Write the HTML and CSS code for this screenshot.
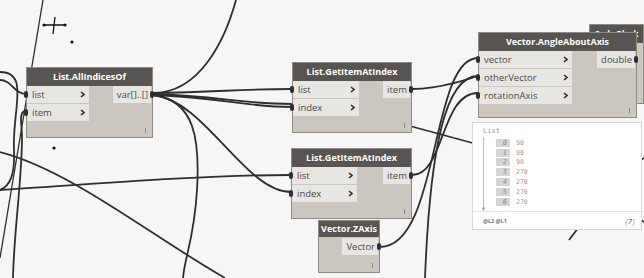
FILE: index.html
```html
<!DOCTYPE html>
<html>
  <head>
    <title>Dynamo graph</title>
    <link rel="stylesheet" href="styles.css">
  </head>
  <body>
    <div class="canvas">
      <svg class="wires" width="644" height="278" viewBox="0 0 644 278">
        <g class="wire">
          <path class="thin" d="M43,0 L0,258"/>
          <path d="M0,80 C12,80 14,94 26,94"/>
          <path d="M0,72 C30,72 12,110 14,150 C15,175 10,186 0,190"/>
          <path d="M26,111 C18,111 22,125 22,137 C22,180 14,230 13,278"/>
          <path d="M0,152 C70,170 150,235 225,278"/>
          <path d="M0,190 C80,185 200,175 291,175"/>
          <!-- from List.AllIndicesOf -->
          <path d="M153,93 C200,93 225,40 236,0"/>
          <path d="M153,93 C220,92 240,89 292,89"/>
          <path d="M153,94 C220,96 240,104 292,104"/>
          <path d="M153,95 C225,98 245,107 292,107"/>
          <path d="M153,95 C205,100 245,192 291,192"/>
          <path d="M153,95 C195,100 200,140 197,190 S185,255 183,278"/>
          <path d="M292,94 L480,145"/>
          <!-- into Vector.AngleAboutAxis -->
          <path d="M412,89 C470,89 530,48 589,48"/>
          <path d="M412,175 C445,175 440,93 478,93"/>
          <path d="M380,247 C440,247 430,58 478,58"/>
          <path d="M478,76 C445,76 430,150 425,278"/>
          <path d="M569,240 C600,200 620,170 644,158"/>
          <path d="M610,200 L644,222"/>
          <path d="M636,48 L644,48"/>
        </g>
        <g class="cursor">
          <path d="M44,25 L65,25 M55,17 L53,34"/>
          <circle cx="44" cy="25" r="1.6"/>
          <circle cx="65" cy="25" r="1.6"/>
          <circle cx="72" cy="42" r="1.6"/>
          <circle cx="54" cy="148" r="1.6"/>
        </g>
      </svg>

      <div class="node n-indices">
        <div class="node-title">List.AllIndicesOf</div>
        <div class="node-body">
          <div class="inputs">
            <div class="in-row"><span>list</span><svg class="chev" width="5" height="7"><path d="M1,1 L4,3.5 L1,6"/></svg></div>
            <div class="in-row"><span>item</span><svg class="chev" width="5" height="7"><path d="M1,1 L4,3.5 L1,6"/></svg></div>
          </div>
          <div class="outputs">
            <div class="out-row">var[]..[]</div>
          </div>
          <span class="grip"></span>
        </div>
      </div>

      <div class="node n-get1">
        <div class="node-title">List.GetItemAtIndex</div>
        <div class="node-body">
          <div class="inputs">
            <div class="in-row"><span>list</span><svg class="chev" width="5" height="7"><path d="M1,1 L4,3.5 L1,6"/></svg></div>
            <div class="in-row"><span>index</span><svg class="chev" width="5" height="7"><path d="M1,1 L4,3.5 L1,6"/></svg></div>
          </div>
          <div class="outputs">
            <div class="out-row">item</div>
          </div>
          <span class="grip"></span>
        </div>
      </div>

      <div class="node n-get2">
        <div class="node-title">List.GetItemAtIndex</div>
        <div class="node-body">
          <div class="inputs">
            <div class="in-row"><span>list</span><svg class="chev" width="5" height="7"><path d="M1,1 L4,3.5 L1,6"/></svg></div>
            <div class="in-row"><span>index</span><svg class="chev" width="5" height="7"><path d="M1,1 L4,3.5 L1,6"/></svg></div>
          </div>
          <div class="outputs">
            <div class="out-row">item</div>
          </div>
          <span class="grip"></span>
        </div>
      </div>

      <div class="node n-zaxis">
        <div class="node-title">Vector.ZAxis</div>
        <div class="node-body">
          <div class="inputs"></div>
          <div class="outputs">
            <div class="out-row">Vector</div>
          </div>
          <span class="grip"></span>
        </div>
      </div>

      <div class="node n-hidden">
        <div class="node-title">Code Block</div>
        <div class="node-body"></div>
      </div>

      <div class="node n-angle">
        <div class="node-title">Vector.AngleAboutAxis</div>
        <div class="node-body">
          <div class="inputs">
            <div class="in-row"><span>vector</span><svg class="chev" width="5" height="7"><path d="M1,1 L4,3.5 L1,6"/></svg></div>
            <div class="in-row"><span>otherVector</span><svg class="chev" width="5" height="7"><path d="M1,1 L4,3.5 L1,6"/></svg></div>
            <div class="in-row"><span>rotationAxis</span><svg class="chev" width="5" height="7"><path d="M1,1 L4,3.5 L1,6"/></svg></div>
          </div>
          <div class="outputs">
            <div class="out-row">double</div>
          </div>
          <span class="grip"></span>
        </div>
      </div>

      <div class="preview">
        <div class="pv-main">
          <div class="pv-title">List</div>
          <div class="pv-list">
            <div class="pv-row"><span class="pv-idx">0</span><span class="pv-val">90</span></div>
            <div class="pv-row"><span class="pv-idx">1</span><span class="pv-val">90</span></div>
            <div class="pv-row"><span class="pv-idx">2</span><span class="pv-val">90</span></div>
            <div class="pv-row"><span class="pv-idx">3</span><span class="pv-val">270</span></div>
            <div class="pv-row"><span class="pv-idx">4</span><span class="pv-val">270</span></div>
            <div class="pv-row"><span class="pv-idx">5</span><span class="pv-val">270</span></div>
            <div class="pv-row"><span class="pv-idx">6</span><span class="pv-val">270</span></div>
          </div>
        </div>
        <div class="pv-foot">
          <span class="pv-levels">@L2 @L1</span>
          <span class="pv-count">{<b>7</b>}</span>
        </div>
      </div>
    </div>
  </body>
</html>
```

FILE: styles.css
```css
body {
  margin: 0;
  background-color: #f6f6f6;
  font-family: "Open Sans", sans-serif;
}

.canvas {
  position: relative;
  width: 644px;
  height: 278px;
  overflow: hidden;
  background-color: #f6f6f6;
}

.wires {
  position: absolute;
  left: 0;
  top: 0;
}

.wire path {
  fill: none;
  stroke: #2e2e2e;
  stroke-width: 1.8;
}

.wire .thin {
  stroke-width: 1.3;
}

.cursor path {
  fill: none;
  stroke: #111;
  stroke-width: 1.3;
}

.cursor circle {
  fill: #111;
}

/* nodes */
.node {
  position: absolute;
  box-sizing: border-box;
  display: flex;
  flex-direction: column;
  background-color: #cbc7c0;
  border: 1px solid #8e8a84;
}

.node-title {
  height: 18px;
  line-height: 18px;
  background-color: #575451;
  color: white;
  font-size: 9px;
  font-weight: 700;
  text-align: center;
  white-space: nowrap;
  overflow: hidden;
}

.node-body {
  position: relative;
  flex: 1;
  display: flex;
  justify-content: space-between;
  align-items: flex-start;
}

.inputs {
  display: flex;
  flex-direction: column;
  gap: 1px;
}

.in-row {
  position: relative;
  height: 17px;
  display: flex;
  align-items: center;
  justify-content: space-between;
  padding: 0 4px 0 5px;
  background-color: #e8e6e2;
  color: #4a4845;
  font-size: 9.5px;
}

.in-row::before {
  content: "";
  position: absolute;
  left: -3px;
  top: 5px;
  width: 4px;
  height: 7px;
  border-radius: 2px;
  background-color: #2e2e2e;
}

.chev path {
  fill: none;
  stroke: #2e2c2a;
  stroke-width: 1.6;
}

.out-row {
  position: relative;
  height: 17px;
  line-height: 17px;
  padding: 0 3px 0 4px;
  margin-right: 1px;
  background-color: #e8e6e2;
  color: #4a4845;
  font-size: 9.5px;
  white-space: nowrap;
}

.out-row::after {
  content: "";
  position: absolute;
  right: -3px;
  top: 5px;
  width: 4px;
  height: 7px;
  border-radius: 2px;
  background-color: #2e2e2e;
}

.grip {
  position: absolute;
  right: 6px;
  bottom: 4px;
  width: 1px;
  height: 5px;
  background-color: #8a8680;
}

.n-indices {
  left: 26px;
  top: 67px;
  width: 127px;
  height: 71px;
}

.n-indices .inputs {
  width: 62px;
}

.n-get1 {
  left: 292px;
  top: 62px;
  width: 120px;
  height: 71px;
}

.n-get1 .inputs {
  width: 66px;
}

.n-get2 {
  left: 291px;
  top: 148px;
  width: 121px;
  height: 71px;
}

.n-get2 .inputs {
  width: 65px;
}

.n-zaxis {
  left: 318px;
  top: 220px;
  width: 62px;
  height: 53px;
}

.n-zaxis .node-title {
  height: 16px;
  line-height: 16px;
}

.n-zaxis .outputs {
  margin-top: 1px;
}

.n-hidden {
  left: 589px;
  top: 24px;
  width: 55px;
  height: 80px;
}

.n-hidden .node-title {
  font-size: 8px;
}

.n-angle {
  left: 478px;
  top: 32px;
  width: 159px;
  height: 86px;
}

.n-angle .inputs {
  width: 93px;
}

/* watch preview */
.preview {
  position: absolute;
  left: 472px;
  top: 122px;
  width: 170px;
  height: 108px;
  box-sizing: border-box;
  display: flex;
  flex-direction: column;
  background-color: white;
  border: 1px solid #d9d9d9;
}

.pv-main {
  flex: 1;
  padding: 4px 0 0 10px;
}

.pv-title {
  height: 9px;
  line-height: 9px;
  font-family: "DejaVu Sans Mono", monospace;
  font-size: 7px;
  color: #9a9a9a;
}

.pv-list {
  position: relative;
  margin-top: 1px;
  border-left: 1px solid #bdbdbd;
  padding: 1px 0 4px 12px;
}

.pv-list::after {
  content: "";
  position: absolute;
  left: -2px;
  bottom: 1px;
  width: 3px;
  height: 3px;
  border-radius: 50%;
  background-color: #aaa;
}

.pv-row {
  display: flex;
  align-items: center;
  gap: 6px;
  height: 9.8px;
}

.pv-idx {
  width: 14px;
  height: 8px;
  line-height: 8px;
  padding-right: 3px;
  box-sizing: border-box;
  background-color: #d6d6d6;
  color: #8a8a8a;
  font-family: "DejaVu Sans Mono", monospace;
  font-size: 7px;
  font-style: italic;
  text-align: right;
}

.pv-val {
  font-family: "DejaVu Sans Mono", monospace;
  font-size: 6.5px;
  color: #9a9a9a;
}

.pv-foot {
  height: 17px;
  display: flex;
  align-items: center;
  justify-content: space-between;
  padding: 0 6px 0 10px;
  border-top: 1px solid #e3e3e3;
}

.pv-levels {
  font-size: 5.5px;
  font-weight: 700;
  color: #777;
}

.pv-count {
  font-size: 8px;
  font-style: italic;
  color: #999;
}

.pv-count b {
  font-weight: 400;
  color: #b03a3a;
}
```
